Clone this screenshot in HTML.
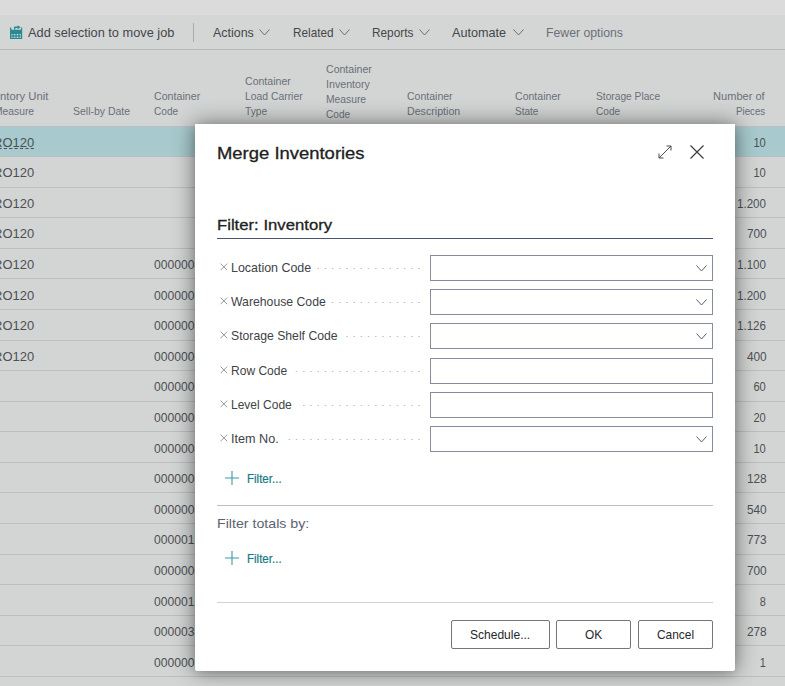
<!DOCTYPE html>
<html><head><meta charset="utf-8"><title>Merge Inventories</title>
<style>
html,body{margin:0;padding:0;}
body{width:785px;height:686px;overflow:hidden;position:relative;background:#d3d5d5;font-family:"Liberation Sans", sans-serif;}
.a{position:absolute;}
.t{position:absolute;white-space:nowrap;line-height:1;transform-origin:0 0;}
.r{transform-origin:100% 0;}
.ln{position:absolute;left:0;width:785px;height:1px;background:#bcbfc1;}
.inp{position:absolute;left:430px;width:283px;height:26px;box-sizing:border-box;border:1px solid #868d98;background:#fff;}
.dots{position:absolute;height:1px;background-image:linear-gradient(90deg,#c3c6ca 0,#c3c6ca 2px,transparent 2px);background-size:7px 1px;background-repeat:repeat-x;}
.btn{position:absolute;top:620px;height:29px;box-sizing:border-box;border:1px solid #767676;border-radius:2px;background:#fff;}
</style></head><body>
<div class="a" style="left:0;top:0;width:785px;height:15px;background:#dbdbdb"></div>
<div class="a" style="left:0;top:15px;width:785px;height:34px;background:#d4d6d6"></div>
<div class="a" style="left:0;top:49px;width:785px;height:1px;background:#b6babd"></div>
<div class="a" style="left:193px;top:23px;width:1px;height:19px;background:#a9adb0"></div>
<div class="a" style="left:0;top:126px;width:785px;height:1px;background:#bcbfc1"></div>
<div class="a" style="left:0;top:127px;width:785px;height:29px;background:#a8cace"></div>
<div class="ln" style="top:156px"></div>
<div class="ln" style="top:187px"></div>
<div class="ln" style="top:217px"></div>
<div class="ln" style="top:248px"></div>
<div class="ln" style="top:278px"></div>
<div class="ln" style="top:309px"></div>
<div class="ln" style="top:340px"></div>
<div class="ln" style="top:370px"></div>
<div class="ln" style="top:401px"></div>
<div class="ln" style="top:431px"></div>
<div class="ln" style="top:462px"></div>
<div class="ln" style="top:492px"></div>
<div class="ln" style="top:523px"></div>
<div class="ln" style="top:554px"></div>
<div class="ln" style="top:584px"></div>
<div class="ln" style="top:615px"></div>
<div class="ln" style="top:645px"></div>
<div class="ln" style="top:676px"></div>
<div class="t" style="left:27.60px;top:26.90px;font-size:12.6px;color:#43464a;transform:scaleX(1.0151);">Add selection to move job</div>
<div class="t" style="left:212.90px;top:26.90px;font-size:12.6px;color:#43464a;transform:scaleX(0.9876);">Actions</div>
<div class="t" style="left:292.50px;top:26.90px;font-size:12.6px;color:#43464a;transform:scaleX(0.9327);">Related</div>
<div class="t" style="left:372.00px;top:26.90px;font-size:12.6px;color:#43464a;transform:scaleX(0.9386);">Reports</div>
<div class="t" style="left:452.40px;top:26.90px;font-size:12.6px;color:#43464a;transform:scaleX(1.0036);">Automate</div>
<div class="t" style="left:545.70px;top:26.90px;font-size:12.6px;color:#6a6f78;transform:scaleX(0.9733);">Fewer options</div>
<div class="t" style="left:-0.50px;top:90.70px;font-size:10.8px;color:#6a6f77;transform:scaleX(1.0454);">ntory Unit</div>
<div class="t" style="left:-6.30px;top:105.90px;font-size:10.8px;color:#6a6f77;transform:scaleX(0.9544);">Measure</div>
<div class="t" style="left:72.90px;top:105.90px;font-size:10.8px;color:#6a6f77;transform:scaleX(0.9709);">Sell-by Date</div>
<div class="t" style="left:153.50px;top:90.70px;font-size:10.8px;color:#6a6f77;transform:scaleX(0.9866);">Container</div>
<div class="t" style="left:153.50px;top:105.90px;font-size:10.8px;color:#6a6f77;transform:scaleX(0.9375);">Code</div>
<div class="t" style="left:245.00px;top:75.60px;font-size:10.8px;color:#6a6f77;transform:scaleX(0.9780);">Container</div>
<div class="t" style="left:245.00px;top:90.70px;font-size:10.8px;color:#6a6f77;transform:scaleX(0.9598);">Load Carrier</div>
<div class="t" style="left:245.00px;top:105.90px;font-size:10.8px;color:#6a6f77;transform:scaleX(0.9521);">Type</div>
<div class="t" style="left:326.20px;top:63.50px;font-size:10.8px;color:#6a6f77;transform:scaleX(0.9780);">Container</div>
<div class="t" style="left:326.20px;top:78.60px;font-size:10.8px;color:#6a6f77;transform:scaleX(0.9883);">Inventory</div>
<div class="t" style="left:326.20px;top:93.70px;font-size:10.8px;color:#6a6f77;transform:scaleX(0.9544);">Measure</div>
<div class="t" style="left:326.20px;top:108.80px;font-size:10.8px;color:#6a6f77;transform:scaleX(0.9375);">Code</div>
<div class="t" style="left:407.40px;top:90.70px;font-size:10.8px;color:#6a6f77;transform:scaleX(0.9738);">Container</div>
<div class="t" style="left:407.40px;top:105.90px;font-size:10.8px;color:#6a6f77;transform:scaleX(0.9868);">Description</div>
<div class="t" style="left:515.00px;top:90.70px;font-size:10.8px;color:#6a6f77;transform:scaleX(0.9780);">Container</div>
<div class="t" style="left:515.00px;top:105.90px;font-size:10.8px;color:#6a6f77;transform:scaleX(0.9239);">State</div>
<div class="t" style="left:595.80px;top:90.70px;font-size:10.8px;color:#6a6f77;transform:scaleX(0.9450);">Storage Place</div>
<div class="t" style="left:595.80px;top:105.90px;font-size:10.8px;color:#6a6f77;transform:scaleX(0.9337);">Code</div>
<div class="t" style="left:713.10px;top:90.70px;font-size:10.8px;color:#6a6f77;transform:scaleX(1.0257);">Number of</div>
<div class="t" style="left:735.60px;top:105.90px;font-size:10.8px;color:#6a6f77;transform:scaleX(0.9006);">Pieces</div>
<div class="t" style="left:-7.30px;top:136.70px;font-size:12.4px;color:#4d5053;transform:scaleX(1.0493);height:11.4px;border-bottom:1px dashed #4d5053;">RO120</div>
<div class="t r" style="right:18.80px;top:136.70px;font-size:12.4px;color:#4d5053;transform:scaleX(0.8988);">10</div>
<div class="t" style="left:-7.30px;top:167.29px;font-size:12.4px;color:#4d5053;transform:scaleX(1.0493);">RO120</div>
<div class="t r" style="right:18.80px;top:167.29px;font-size:12.4px;color:#4d5053;transform:scaleX(0.8988);">10</div>
<div class="t" style="left:-7.30px;top:197.88px;font-size:12.4px;color:#4d5053;transform:scaleX(1.0493);">RO120</div>
<div class="t r" style="right:18.80px;top:197.88px;font-size:12.4px;color:#4d5053;transform:scaleX(0.9350);">1.200</div>
<div class="t" style="left:-7.30px;top:228.47px;font-size:12.4px;color:#4d5053;transform:scaleX(1.0493);">RO120</div>
<div class="t r" style="right:18.80px;top:228.47px;font-size:12.4px;color:#4d5053;transform:scaleX(0.9571);">700</div>
<div class="t" style="left:-7.30px;top:259.06px;font-size:12.4px;color:#4d5053;transform:scaleX(1.0493);">RO120</div>
<div class="t" style="left:154.20px;top:259.06px;font-size:12.4px;color:#4d5053;transform:scaleX(0.9792);">000000</div>
<div class="t r" style="right:18.80px;top:259.06px;font-size:12.4px;color:#4d5053;transform:scaleX(0.9350);">1.100</div>
<div class="t" style="left:-7.30px;top:289.65px;font-size:12.4px;color:#4d5053;transform:scaleX(1.0493);">RO120</div>
<div class="t" style="left:154.20px;top:289.65px;font-size:12.4px;color:#4d5053;transform:scaleX(0.9792);">000000</div>
<div class="t r" style="right:18.80px;top:289.65px;font-size:12.4px;color:#4d5053;transform:scaleX(0.9350);">1.200</div>
<div class="t" style="left:-7.30px;top:320.24px;font-size:12.4px;color:#4d5053;transform:scaleX(1.0493);">RO120</div>
<div class="t" style="left:154.20px;top:320.24px;font-size:12.4px;color:#4d5053;transform:scaleX(0.9792);">000000</div>
<div class="t r" style="right:18.80px;top:320.24px;font-size:12.4px;color:#4d5053;transform:scaleX(0.9350);">1.126</div>
<div class="t" style="left:-7.30px;top:350.83px;font-size:12.4px;color:#4d5053;transform:scaleX(1.0493);">RO120</div>
<div class="t" style="left:154.20px;top:350.83px;font-size:12.4px;color:#4d5053;transform:scaleX(0.9792);">000000</div>
<div class="t r" style="right:18.80px;top:350.83px;font-size:12.4px;color:#4d5053;transform:scaleX(0.9571);">400</div>
<div class="t" style="left:154.20px;top:381.42px;font-size:12.4px;color:#4d5053;transform:scaleX(0.9792);">000000</div>
<div class="t r" style="right:18.80px;top:381.42px;font-size:12.4px;color:#4d5053;transform:scaleX(0.8988);">60</div>
<div class="t" style="left:154.20px;top:412.01px;font-size:12.4px;color:#4d5053;transform:scaleX(0.9792);">000000</div>
<div class="t r" style="right:18.80px;top:412.01px;font-size:12.4px;color:#4d5053;transform:scaleX(0.8988);">20</div>
<div class="t" style="left:154.20px;top:442.60px;font-size:12.4px;color:#4d5053;transform:scaleX(0.9792);">000000</div>
<div class="t r" style="right:18.80px;top:442.60px;font-size:12.4px;color:#4d5053;transform:scaleX(0.8988);">10</div>
<div class="t" style="left:154.20px;top:473.19px;font-size:12.4px;color:#4d5053;transform:scaleX(0.9792);">000000</div>
<div class="t r" style="right:18.80px;top:473.19px;font-size:12.4px;color:#4d5053;transform:scaleX(0.9571);">128</div>
<div class="t" style="left:154.20px;top:503.78px;font-size:12.4px;color:#4d5053;transform:scaleX(0.9792);">000000</div>
<div class="t r" style="right:18.80px;top:503.78px;font-size:12.4px;color:#4d5053;transform:scaleX(0.9571);">540</div>
<div class="t" style="left:154.20px;top:534.37px;font-size:12.4px;color:#4d5053;transform:scaleX(0.9792);">000001</div>
<div class="t r" style="right:18.80px;top:534.37px;font-size:12.4px;color:#4d5053;transform:scaleX(0.9571);">773</div>
<div class="t" style="left:154.20px;top:564.96px;font-size:12.4px;color:#4d5053;transform:scaleX(0.9792);">000000</div>
<div class="t r" style="right:18.80px;top:564.96px;font-size:12.4px;color:#4d5053;transform:scaleX(0.9571);">700</div>
<div class="t" style="left:154.20px;top:595.55px;font-size:12.4px;color:#4d5053;transform:scaleX(0.9792);">000001</div>
<div class="t r" style="right:18.80px;top:595.55px;font-size:12.4px;color:#4d5053;transform:scaleX(0.8833);">8</div>
<div class="t" style="left:154.20px;top:626.14px;font-size:12.4px;color:#4d5053;transform:scaleX(0.9792);">000003</div>
<div class="t r" style="right:18.80px;top:626.14px;font-size:12.4px;color:#4d5053;transform:scaleX(0.9571);">278</div>
<div class="t" style="left:154.20px;top:656.73px;font-size:12.4px;color:#4d5053;transform:scaleX(0.9792);">000000</div>
<div class="t r" style="right:18.80px;top:656.73px;font-size:12.4px;color:#4d5053;transform:scaleX(0.8833);">1</div>
<svg class="a" style="left:259.4px;top:29.3px" width="11" height="7" viewBox="0 0 11 7"><path d="M0.5 0.5 L5.5 6 L10.5 0.5" fill="none" stroke="#6a6e72" stroke-width="1"/></svg>
<svg class="a" style="left:339px;top:29.3px" width="11" height="7" viewBox="0 0 11 7"><path d="M0.5 0.5 L5.5 6 L10.5 0.5" fill="none" stroke="#6a6e72" stroke-width="1"/></svg>
<svg class="a" style="left:418.8px;top:29.3px" width="11" height="7" viewBox="0 0 11 7"><path d="M0.5 0.5 L5.5 6 L10.5 0.5" fill="none" stroke="#6a6e72" stroke-width="1"/></svg>
<svg class="a" style="left:512.5px;top:29.3px" width="11" height="7" viewBox="0 0 11 7"><path d="M0.5 0.5 L5.5 6 L10.5 0.5" fill="none" stroke="#6a6e72" stroke-width="1"/></svg>
<svg class="a" style="left:9.9px;top:24px" width="13" height="16" viewBox="0 0 13 16"><g fill="#2b8a90"><path d="M0 3.6h1.3v2.2h9.6V3.6h1.3V15H0z"/><path d="M3.9 5.6V3.9Q3.9 2.6 5.2 2.6H7.6V1.2L10.6 3.3L7.6 5.3V4H5.4V5.6z"/></g><g fill="#cfe1e2"><rect x="1.4" y="10" width="1.1" height="1.1"/><rect x="4.2" y="10" width="1.1" height="1.1"/><rect x="7" y="10" width="1.1" height="1.1"/><rect x="9.8" y="10" width="1.1" height="1.1"/><rect x="1.4" y="12.8" width="1.1" height="1.1"/><rect x="4.2" y="12.8" width="1.1" height="1.1"/><rect x="7" y="12.8" width="1.1" height="1.1"/><rect x="9.8" y="12.8" width="1.1" height="1.1"/></g><g fill="#cfe1e2" opacity="0.35"><rect x="1.4" y="11.1" width="1.1" height="1.7"/><rect x="4.2" y="11.1" width="1.1" height="1.7"/><rect x="7" y="11.1" width="1.1" height="1.7"/><rect x="9.8" y="11.1" width="1.1" height="1.7"/><rect x="2.5" y="10" width="1.7" height="1.1"/><rect x="5.3" y="10" width="1.7" height="1.1"/><rect x="8.1" y="10" width="1.7" height="1.1"/><rect x="2.5" y="12.8" width="1.7" height="1.1"/><rect x="5.3" y="12.8" width="1.7" height="1.1"/><rect x="8.1" y="12.8" width="1.7" height="1.1"/></g></svg>
<div class="a" style="left:195px;top:124px;width:540px;height:547px;background:#fff;border-radius:0 0 2px 2px;box-shadow:0 0 22px 1px rgba(0,0,0,0.45),0 2px 8px rgba(0,0,0,0.12)"></div>
<div class="a" style="left:217px;top:238px;width:496px;height:1px;background:#4b566e"></div>
<div class="inp" style="top:255px"></div>
<svg class="a" style="left:695.7px;top:265px" width="11" height="7" viewBox="0 0 11 7"><path d="M0.5 0.5 L5.5 6 L10.5 0.5" fill="none" stroke="#5a6068" stroke-width="1"/></svg>
<svg class="a" style="left:220px;top:262.6px" width="8" height="8" viewBox="0 0 8 8"><path d="M0.6 0.6L7.2 7.2M7.2 0.6L0.6 7.2" stroke="#8a8d91" stroke-width="0.9" fill="none"/></svg>
<div class="inp" style="top:289px"></div>
<svg class="a" style="left:695.7px;top:299px" width="11" height="7" viewBox="0 0 11 7"><path d="M0.5 0.5 L5.5 6 L10.5 0.5" fill="none" stroke="#5a6068" stroke-width="1"/></svg>
<svg class="a" style="left:220px;top:296.6px" width="8" height="8" viewBox="0 0 8 8"><path d="M0.6 0.6L7.2 7.2M7.2 0.6L0.6 7.2" stroke="#8a8d91" stroke-width="0.9" fill="none"/></svg>
<div class="inp" style="top:323px"></div>
<svg class="a" style="left:695.7px;top:333px" width="11" height="7" viewBox="0 0 11 7"><path d="M0.5 0.5 L5.5 6 L10.5 0.5" fill="none" stroke="#5a6068" stroke-width="1"/></svg>
<svg class="a" style="left:220px;top:330.6px" width="8" height="8" viewBox="0 0 8 8"><path d="M0.6 0.6L7.2 7.2M7.2 0.6L0.6 7.2" stroke="#8a8d91" stroke-width="0.9" fill="none"/></svg>
<div class="inp" style="top:358px"></div>
<svg class="a" style="left:220px;top:365.6px" width="8" height="8" viewBox="0 0 8 8"><path d="M0.6 0.6L7.2 7.2M7.2 0.6L0.6 7.2" stroke="#8a8d91" stroke-width="0.9" fill="none"/></svg>
<div class="inp" style="top:392px"></div>
<svg class="a" style="left:220px;top:399.6px" width="8" height="8" viewBox="0 0 8 8"><path d="M0.6 0.6L7.2 7.2M7.2 0.6L0.6 7.2" stroke="#8a8d91" stroke-width="0.9" fill="none"/></svg>
<div class="inp" style="top:426px"></div>
<svg class="a" style="left:695.7px;top:436px" width="11" height="7" viewBox="0 0 11 7"><path d="M0.5 0.5 L5.5 6 L10.5 0.5" fill="none" stroke="#5a6068" stroke-width="1"/></svg>
<svg class="a" style="left:220px;top:433.6px" width="8" height="8" viewBox="0 0 8 8"><path d="M0.6 0.6L7.2 7.2M7.2 0.6L0.6 7.2" stroke="#8a8d91" stroke-width="0.9" fill="none"/></svg>
<div class="a" style="left:217px;top:505px;width:496px;height:1px;background:#bcc0c8"></div>
<div class="a" style="left:217px;top:602px;width:496px;height:1px;background:#d2d2d2"></div>
<svg class="a" style="left:225px;top:471px" width="14" height="14" viewBox="0 0 14 14"><path d="M7 0V14M0 7H14" stroke="#3f9ba0" stroke-width="1.1" fill="none"/></svg>
<svg class="a" style="left:225px;top:551.4px" width="14" height="14" viewBox="0 0 14 14"><path d="M7 0V14M0 7H14" stroke="#3f9ba0" stroke-width="1.1" fill="none"/></svg>
<div class="btn" style="left:451px;width:99px"></div>
<div class="btn" style="left:556px;width:75px"></div>
<div class="btn" style="left:638px;width:75px"></div>
<svg class="a" style="left:658px;top:145px" width="14" height="14" viewBox="0 0 14 14"><path d="M1 13L13 1M8.5 1H13V5.5M1 8.5V13H5.5" stroke="#4a4a4a" stroke-width="1" fill="none"/></svg>
<svg class="a" style="left:690px;top:145px" width="14" height="14" viewBox="0 0 14 14"><path d="M0.5 0.5L13.5 13.5M13.5 0.5L0.5 13.5" stroke="#3d3d3d" stroke-width="1.2" fill="none"/></svg>
<div class="t" style="left:217.20px;top:145.60px;font-size:16.9px;color:#212121;transform:scaleX(1.0917);-webkit-text-stroke:0.3px #212121;">Merge Inventories</div>
<div class="t" style="left:217.20px;top:217.50px;font-size:14.8px;color:#212121;transform:scaleX(1.1288);-webkit-text-stroke:0.28px #212121;">Filter: Inventory</div>
<div class="t" style="left:230.90px;top:262.10px;font-size:12.6px;color:#404347;transform:scaleX(0.9873);">Location Code</div>
<div class="t" style="left:230.90px;top:296.10px;font-size:12.6px;color:#404347;transform:scaleX(0.9718);">Warehouse Code</div>
<div class="t" style="left:230.90px;top:330.10px;font-size:12.6px;color:#404347;transform:scaleX(0.9698);">Storage Shelf Code</div>
<div class="t" style="left:230.90px;top:365.10px;font-size:12.6px;color:#404347;transform:scaleX(0.9556);">Row Code</div>
<div class="t" style="left:230.90px;top:399.10px;font-size:12.6px;color:#404347;transform:scaleX(0.9542);">Level Code</div>
<div class="t" style="left:230.90px;top:433.10px;font-size:12.6px;color:#404347;transform:scaleX(1.0043);">Item No.</div>
<div class="t" style="left:247.30px;top:472.90px;font-size:12.4px;color:#157b82;transform:scaleX(0.9304);-webkit-text-stroke:0.2px #157b82;">Filter...</div>
<div class="t" style="left:217.10px;top:517.80px;font-size:12.9px;color:#5c6370;transform:scaleX(1.1011);">Filter totals by:</div>
<div class="t" style="left:247.30px;top:553.00px;font-size:12.4px;color:#157b82;transform:scaleX(0.9304);-webkit-text-stroke:0.2px #157b82;">Filter...</div>
<div class="t" style="left:470.20px;top:628.80px;font-size:12.6px;color:#26282b;transform:scaleX(0.9553);">Schedule...</div>
<div class="t" style="left:585.20px;top:628.80px;font-size:12.6px;color:#26282b;transform:scaleX(0.9449);">OK</div>
<div class="t" style="left:657.00px;top:628.80px;font-size:12.6px;color:#26282b;transform:scaleX(0.9464);">Cancel</div>
<svg class="a" style="left:0;top:268px" width="430" height="1" viewBox="0 0 430 1"><line x1="317.4" y1="0.5" x2="420" y2="0.5" stroke="#bfc3c9" stroke-width="1" stroke-dasharray="1.6 5.6"/></svg>
<svg class="a" style="left:0;top:302px" width="430" height="1" viewBox="0 0 430 1"><line x1="331.8" y1="0.5" x2="420" y2="0.5" stroke="#bfc3c9" stroke-width="1" stroke-dasharray="1.6 5.6"/></svg>
<svg class="a" style="left:0;top:336px" width="430" height="1" viewBox="0 0 430 1"><line x1="346.2" y1="0.5" x2="420" y2="0.5" stroke="#bfc3c9" stroke-width="1" stroke-dasharray="1.6 5.6"/></svg>
<svg class="a" style="left:0;top:371px" width="430" height="1" viewBox="0 0 430 1"><line x1="295.8" y1="0.5" x2="420" y2="0.5" stroke="#bfc3c9" stroke-width="1" stroke-dasharray="1.6 5.6"/></svg>
<svg class="a" style="left:0;top:405px" width="430" height="1" viewBox="0 0 430 1"><line x1="303.0" y1="0.5" x2="420" y2="0.5" stroke="#bfc3c9" stroke-width="1" stroke-dasharray="1.6 5.6"/></svg>
<svg class="a" style="left:0;top:439px" width="430" height="1" viewBox="0 0 430 1"><line x1="288.6" y1="0.5" x2="420" y2="0.5" stroke="#bfc3c9" stroke-width="1" stroke-dasharray="1.6 5.6"/></svg>
</body></html>
